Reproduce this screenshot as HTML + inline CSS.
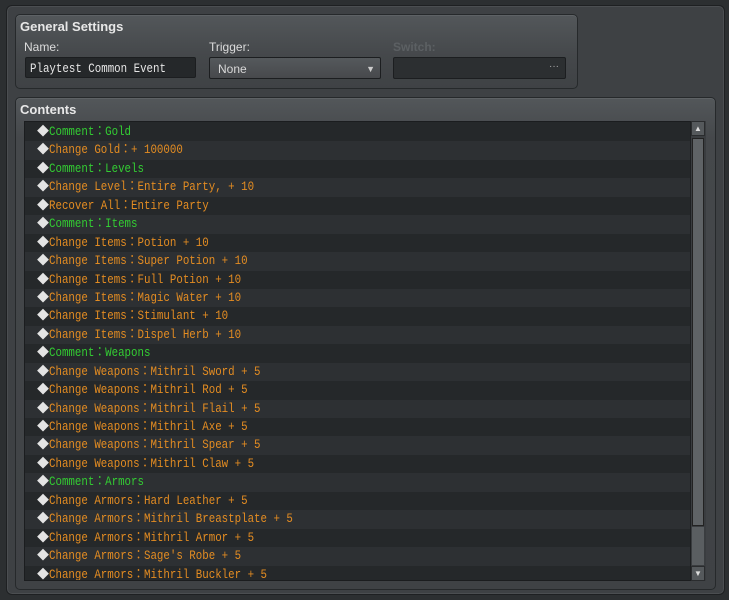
<!DOCTYPE html><html><head><style>
body{margin:0;width:729px;height:600px;background:#2c2f31;font-family:"Liberation Sans",sans-serif;position:relative;overflow:hidden}
.frame{position:absolute;left:6px;top:5px;width:717px;height:588px;background:#3e4144;border:1px solid #1e2022;border-radius:6px;box-shadow:inset 0 0 0 1px #4b4e51}
.panel{position:absolute;background:linear-gradient(#53575a,#45484b 40px,#3f4245);border:1px solid #26292b;border-radius:5px;box-shadow:inset 0 1px 0 #5e6265}
.h{position:absolute;color:#e8e8e8;font-weight:bold;font-size:13px}
.lbl{position:absolute;color:#dcdcdc;font-size:12px}
.box{position:absolute;border:1px solid #1c1e20;border-radius:2px}
.list{position:absolute;left:24px;top:121px;width:681px;height:460px;background:#25282a;border:1px solid #1b1d1f;overflow:hidden;padding-top:1px;box-sizing:border-box}
.row{height:18.45px;line-height:18.45px;font-family:"Liberation Mono","Noto Sans CJK JP",monospace;font-size:13px;padding-left:12px;white-space:pre}
.row:nth-child(odd){background:#25282a}.row:nth-child(even){background:#2d3033}
.d{color:#e4e4e4;font-size:12px;display:inline-block;vertical-align:top}
.g,.o{display:inline-block;transform:scaleX(.83);transform-origin:0 50%;vertical-align:top}
.g{color:#33cc33}.o{color:#e38c22}
.sb{position:absolute;left:690px;top:121px;width:15px;height:460px;background:#3a3d40;border-left:1px solid #1e2022}
</style></head><body>
<div class="frame"></div>
<div class="panel" style="left:15px;top:14px;width:561px;height:73px"></div>
<div class="h" style="left:20px;top:19px">General Settings</div>
<div class="lbl" style="left:24px;top:40px">Name:</div>
<div class="lbl" style="left:209px;top:40px">Trigger:</div>
<div class="lbl" style="left:393px;top:40px;color:#5c6063;font-weight:bold">Switch:</div>
<div class="box" style="left:25px;top:57px;width:171px;height:21px;background:#25282a;color:#e6e6e6;font-family:'Liberation Mono',monospace;font-size:13px;line-height:21px;padding-left:4px;box-sizing:border-box"><span style="display:inline-block;transform:scaleX(.83);transform-origin:0 50%">Playtest Common Event</span></div>
<div class="box" style="left:209px;top:57px;width:172px;height:22px;background:linear-gradient(#55595c,#47494c);color:#d8d8d8;font-size:12px;line-height:22px;padding-left:8px;box-sizing:border-box">None<span style="position:absolute;right:5px;font-size:9px;color:#ccc">▼</span></div>
<div class="box" style="left:393px;top:57px;width:173px;height:22px;background:#2c2f31;box-sizing:border-box"><span style="position:absolute;right:6px;top:3px;color:#aaa;font-size:10px">···</span></div>
<div class="panel" style="left:15px;top:97px;width:699px;height:491px"></div>
<div class="h" style="left:20px;top:102px">Contents</div>
<div class="list">
<div class="row"><span class="d">◆</span><span class="g">Comment：Gold</span></div>
<div class="row"><span class="d">◆</span><span class="o">Change Gold：+ 100000</span></div>
<div class="row"><span class="d">◆</span><span class="g">Comment：Levels</span></div>
<div class="row"><span class="d">◆</span><span class="o">Change Level：Entire Party, + 10</span></div>
<div class="row"><span class="d">◆</span><span class="o">Recover All：Entire Party</span></div>
<div class="row"><span class="d">◆</span><span class="g">Comment：Items</span></div>
<div class="row"><span class="d">◆</span><span class="o">Change Items：Potion + 10</span></div>
<div class="row"><span class="d">◆</span><span class="o">Change Items：Super Potion + 10</span></div>
<div class="row"><span class="d">◆</span><span class="o">Change Items：Full Potion + 10</span></div>
<div class="row"><span class="d">◆</span><span class="o">Change Items：Magic Water + 10</span></div>
<div class="row"><span class="d">◆</span><span class="o">Change Items：Stimulant + 10</span></div>
<div class="row"><span class="d">◆</span><span class="o">Change Items：Dispel Herb + 10</span></div>
<div class="row"><span class="d">◆</span><span class="g">Comment：Weapons</span></div>
<div class="row"><span class="d">◆</span><span class="o">Change Weapons：Mithril Sword + 5</span></div>
<div class="row"><span class="d">◆</span><span class="o">Change Weapons：Mithril Rod + 5</span></div>
<div class="row"><span class="d">◆</span><span class="o">Change Weapons：Mithril Flail + 5</span></div>
<div class="row"><span class="d">◆</span><span class="o">Change Weapons：Mithril Axe + 5</span></div>
<div class="row"><span class="d">◆</span><span class="o">Change Weapons：Mithril Spear + 5</span></div>
<div class="row"><span class="d">◆</span><span class="o">Change Weapons：Mithril Claw + 5</span></div>
<div class="row"><span class="d">◆</span><span class="g">Comment：Armors</span></div>
<div class="row"><span class="d">◆</span><span class="o">Change Armors：Hard Leather + 5</span></div>
<div class="row"><span class="d">◆</span><span class="o">Change Armors：Mithril Breastplate + 5</span></div>
<div class="row"><span class="d">◆</span><span class="o">Change Armors：Mithril Armor + 5</span></div>
<div class="row"><span class="d">◆</span><span class="o">Change Armors：Sage's Robe + 5</span></div>
<div class="row"><span class="d">◆</span><span class="o">Change Armors：Mithril Buckler + 5</span></div>
</div>
<div class="sb">
<div style="position:absolute;left:0;top:0;width:14px;height:15px;background:#55595c;border:1px solid #2a2c2e;box-sizing:border-box;color:#ddd;font-size:8px;text-align:center;line-height:14px">▲</div>
<div style="position:absolute;left:1px;top:17px;width:12px;height:388px;background:#5f6366;border:1px solid #222;box-sizing:border-box"></div>
<div style="position:absolute;left:1px;top:406px;width:12px;height:38px;background:#5a5e61"></div>
<div style="position:absolute;left:0;top:445px;width:14px;height:15px;background:#55595c;border:1px solid #2a2c2e;box-sizing:border-box;color:#ddd;font-size:8px;text-align:center;line-height:14px">▼</div>
</div>
</body></html>
